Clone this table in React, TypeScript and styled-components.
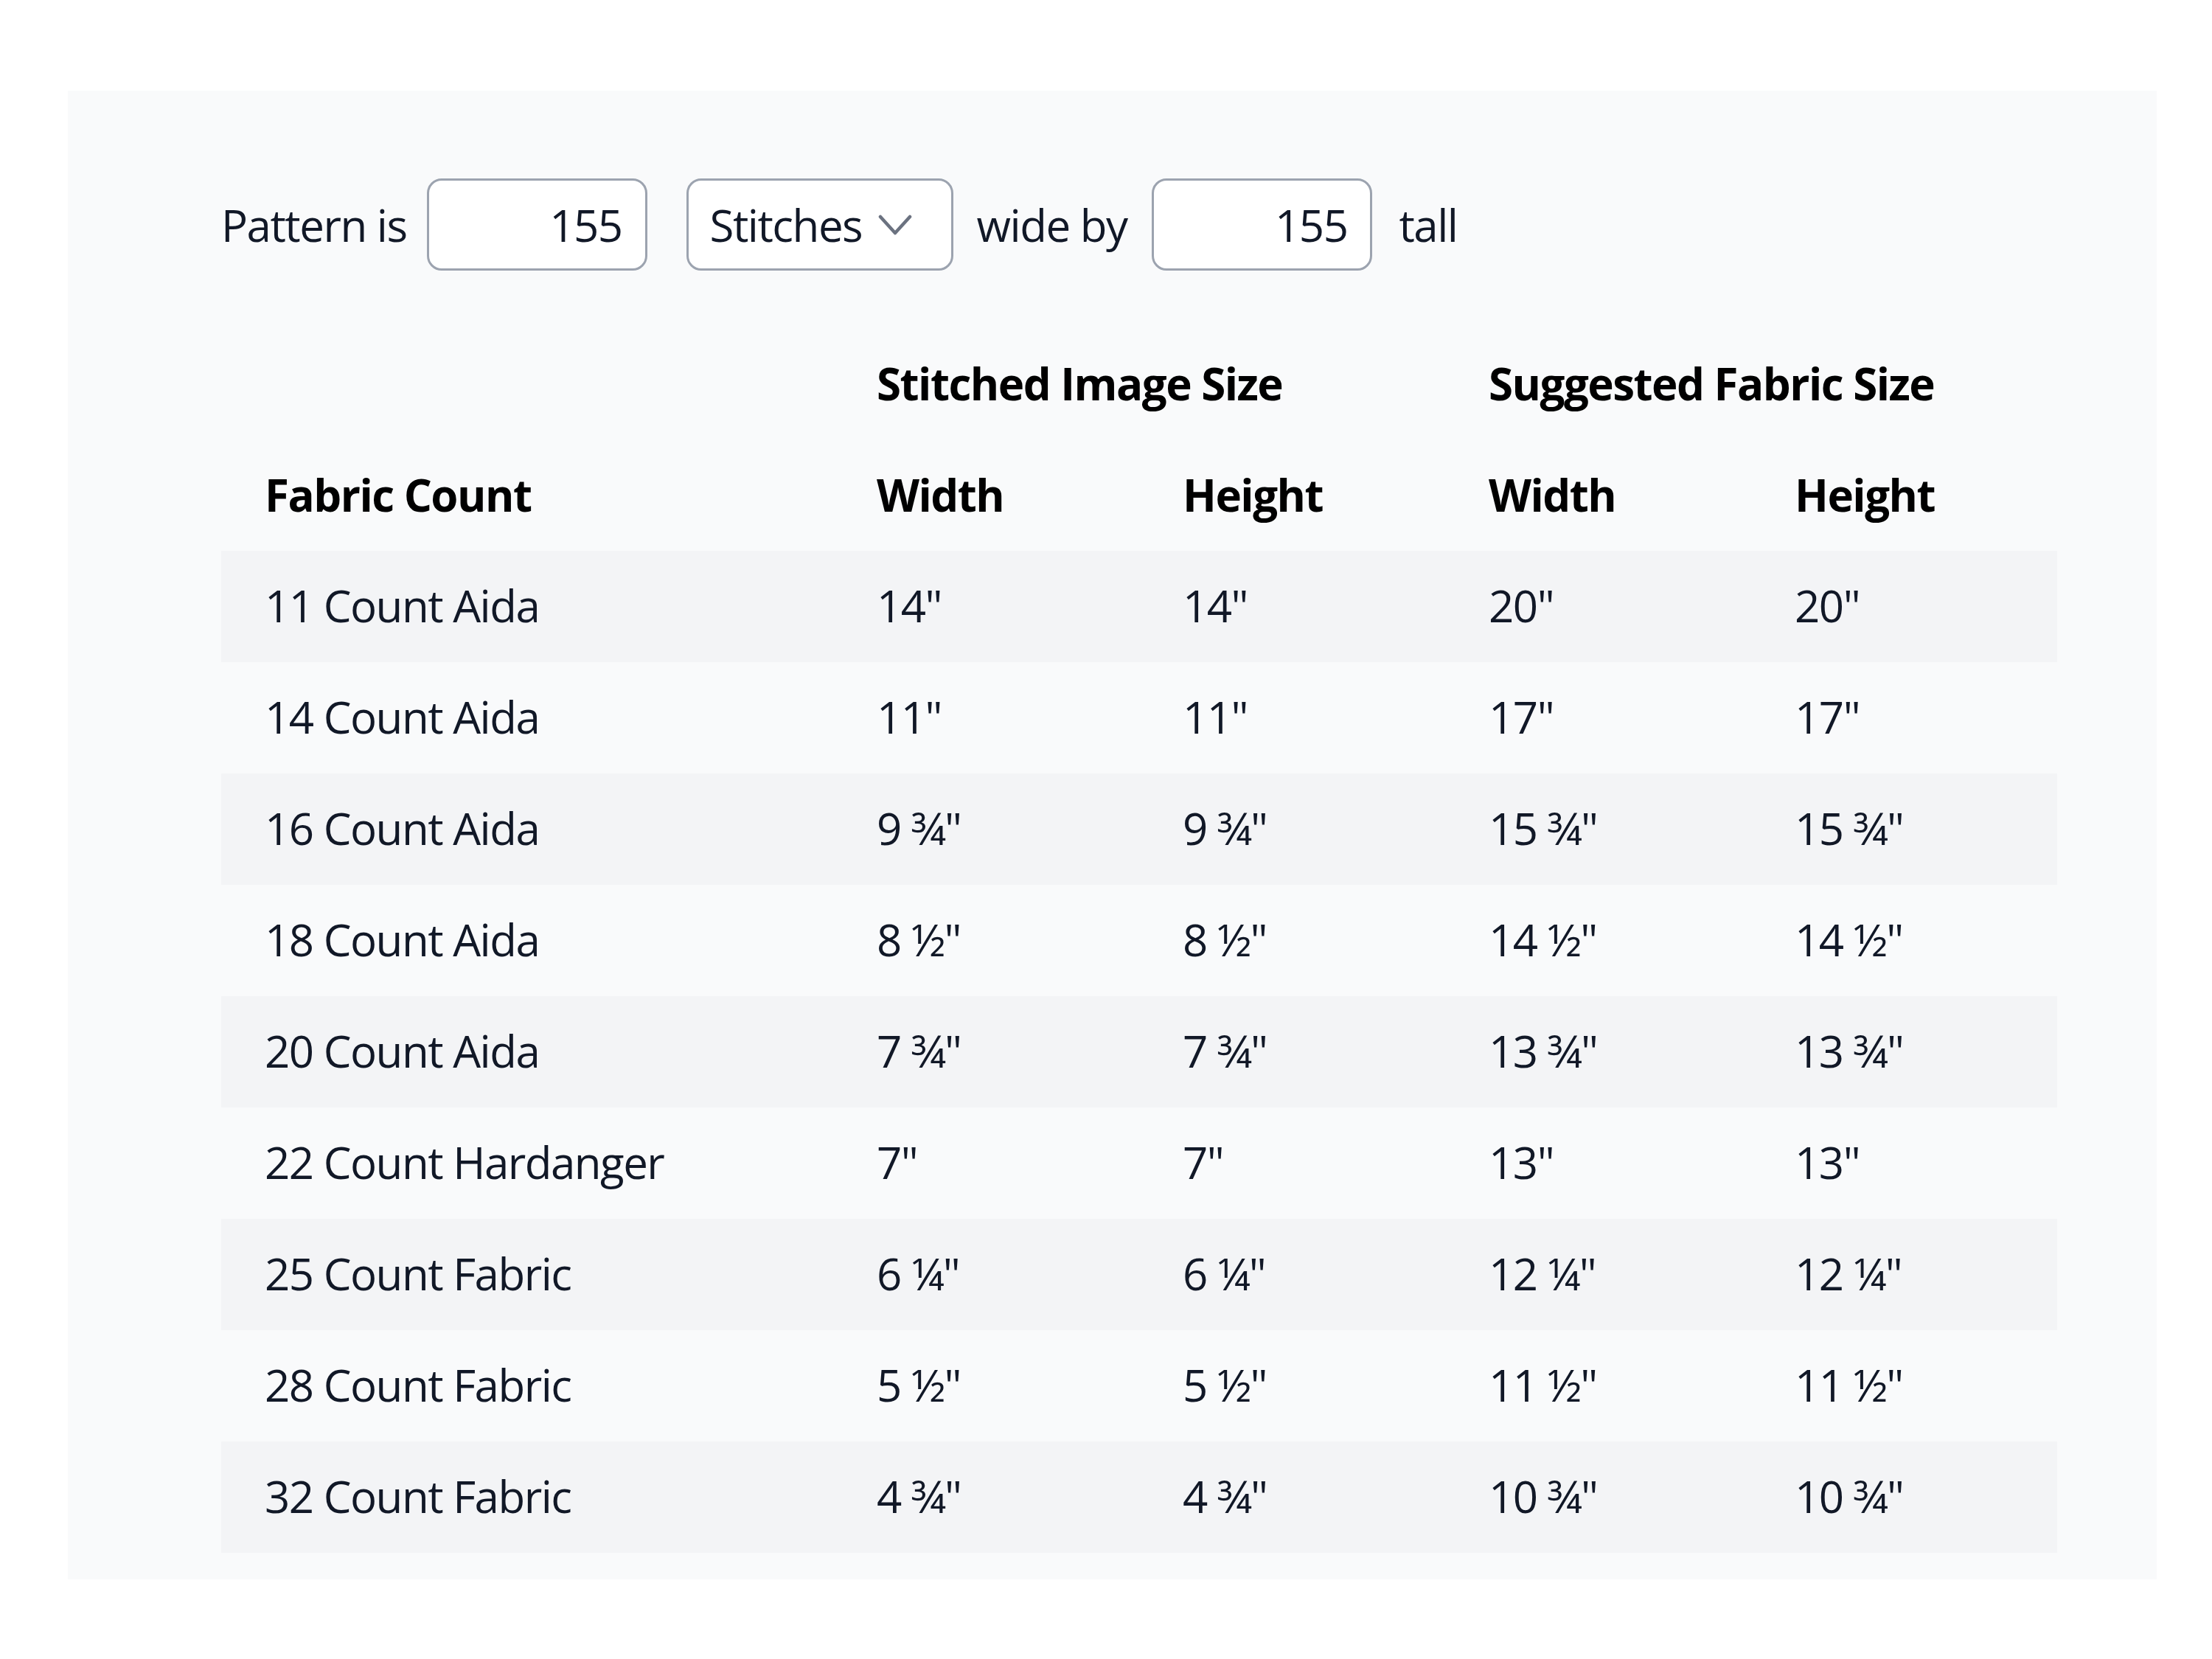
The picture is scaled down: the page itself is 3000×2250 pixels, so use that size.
import React, { useState } from "react";
import styled, { createGlobalStyle } from "styled-components";

const GlobalStyle = createGlobalStyle`
  html, body {
    margin: 0;
    padding: 0;
    background: #ffffff;
  }
  body {
    font-family: "Open Sans", "Noto Sans", "Liberation Sans", sans-serif;
    color: #111827;
  }
  * { box-sizing: border-box; }
`;

const Page = styled.div`
  padding: 123px 0 0 92px;
  width: 3000px;
`;

const Panel = styled.section`
  width: 2833px;
  background: #f9fafb;
  padding: 119px 134px 36px 208px;
`;

const Controls = styled.div`
  display: flex;
  align-items: center;
  height: 125px;
  font-size: 60px;
  letter-spacing: -1.5px;
  color: #111827;
`;

const Label = styled.span<{ $gap: number }>`
  margin-right: ${(p) => p.$gap}px;
  white-space: nowrap;
`;

const NumberInput = styled.input<{ $gap: number }>`
  width: 299px;
  height: 125px;
  border: 3px solid #9ca3af;
  border-radius: 20px;
  background: #ffffff;
  font-family: inherit;
  font-size: 60px;
  letter-spacing: -1.5px;
  color: #111827;
  text-align: right;
  padding: 0 31px 0 20px;
  margin-right: ${(p) => p.$gap}px;
  outline: none;
  -moz-appearance: textfield;
  &::-webkit-outer-spin-button,
  &::-webkit-inner-spin-button {
    -webkit-appearance: none;
    margin: 0;
  }
`;

const SelectWrap = styled.div`
  position: relative;
  width: 362px;
  height: 125px;
  margin-right: 32px;
`;

const Select = styled.select`
  appearance: none;
  -webkit-appearance: none;
  width: 100%;
  height: 100%;
  border: 3px solid #9ca3af;
  border-radius: 20px;
  background: #ffffff;
  font-family: inherit;
  font-size: 60px;
  letter-spacing: -1.5px;
  color: #111827;
  padding: 0 0 0 29px;
  outline: none;
`;

const Chevron = styled.svg`
  position: absolute;
  right: 56px;
  top: 50%;
  transform: translateY(-50%);
  width: 46px;
  height: 28px;
  pointer-events: none;
`;

const Table = styled.table`
  width: 2490px;
  margin-top: 78px;
  border-collapse: collapse;
  table-layout: fixed;
  font-size: 60px;
  letter-spacing: -1.5px;
`;

const HeadCell = styled.th`
  height: 151px;
  padding: 0 0 2px 59px;
  text-align: left;
  vertical-align: middle;
  font-weight: 700;
  line-height: 1;
  color: #000000;
  white-space: nowrap;
`;

const BodyRow = styled.tr`
  &:nth-child(odd) {
    background: #f3f4f6;
  }
`;

const Cell = styled.td`
  height: 151px;
  padding: 0 0 3px 59px;
  vertical-align: middle;
  line-height: 1;
  color: #111827;
  white-space: nowrap;
`;

const fabrics: { name: string; count: number }[] = [
  { name: "11 Count Aida", count: 11 },
  { name: "14 Count Aida", count: 14 },
  { name: "16 Count Aida", count: 16 },
  { name: "18 Count Aida", count: 18 },
  { name: "20 Count Aida", count: 20 },
  { name: "22 Count Hardanger", count: 22 },
  { name: "25 Count Fabric", count: 25 },
  { name: "28 Count Fabric", count: 28 },
  { name: "32 Count Fabric", count: 32 },
];

const fractions: Record<number, string> = { 0: "", 1: "¼", 2: "½", 3: "¾" };

function formatInches(value: number): string {
  const quarters = Math.round(value * 4);
  const whole = Math.floor(quarters / 4);
  const rest = quarters % 4;
  if (rest === 0) return `${whole}"`;
  return `${whole} ${fractions[rest]}"`;
}

export default function App() {
  const [wide, setWide] = useState(155);
  const [tall, setTall] = useState(155);
  const [unit, setUnit] = useState("stitches");

  const size = (n: number, count: number) =>
    unit === "stitches" ? n / count : n;

  return (
    <>
      <GlobalStyle />
      <Page>
        <Panel>
          <Controls>
            <Label $gap={27}>Pattern is</Label>
            <NumberInput
              type="number"
              value={wide}
              $gap={53}
              onChange={(e) => setWide(Number(e.target.value))}
            />
            <SelectWrap>
              <Select value={unit} onChange={(e) => setUnit(e.target.value)}>
                <option value="stitches">Stitches</option>
                <option value="inches">Inches</option>
              </Select>
              <Chevron viewBox="0 0 46 28" fill="none">
                <path
                  d="M3 3 L23 25 L43 3"
                  stroke="#6b7280"
                  strokeWidth="4.5"
                  strokeLinecap="round"
                  strokeLinejoin="round"
                />
              </Chevron>
            </SelectWrap>
            <Label $gap={34}>wide by</Label>
            <NumberInput
              type="number"
              value={tall}
              $gap={36}
              onChange={(e) => setTall(Number(e.target.value))}
            />
            <Label $gap={0}>tall</Label>
          </Controls>

          <Table>
            <colgroup>
              <col style={{ width: 830 }} />
              <col style={{ width: 415 }} />
              <col style={{ width: 415 }} />
              <col style={{ width: 415 }} />
              <col style={{ width: 415 }} />
            </colgroup>
            <thead>
              <tr>
                <HeadCell />
                <HeadCell colSpan={2}>Stitched Image Size</HeadCell>
                <HeadCell colSpan={2}>Suggested Fabric Size</HeadCell>
              </tr>
              <tr>
                <HeadCell>Fabric Count</HeadCell>
                <HeadCell>Width</HeadCell>
                <HeadCell>Height</HeadCell>
                <HeadCell>Width</HeadCell>
                <HeadCell>Height</HeadCell>
              </tr>
            </thead>
            <tbody>
              {fabrics.map((f) => {
                const w = size(wide, f.count);
                const h = size(tall, f.count);
                return (
                  <BodyRow key={f.name}>
                    <Cell>{f.name}</Cell>
                    <Cell>{formatInches(w)}</Cell>
                    <Cell>{formatInches(h)}</Cell>
                    <Cell>{formatInches(w + 6)}</Cell>
                    <Cell>{formatInches(h + 6)}</Cell>
                  </BodyRow>
                );
              })}
            </tbody>
          </Table>
        </Panel>
      </Page>
    </>
  );
}
